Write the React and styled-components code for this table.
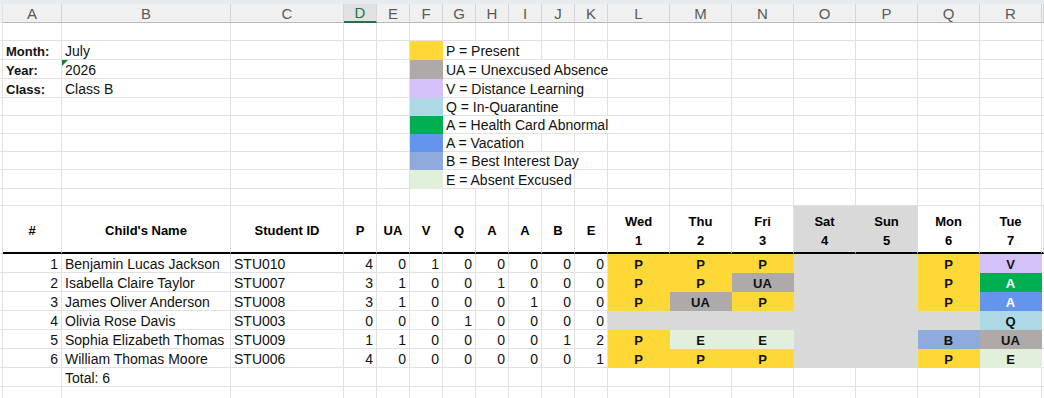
import React from 'react';
import styled, { createGlobalStyle } from 'styled-components';

const GRID = '#E1E1E1';
const COLS = '3px 59px 169px 113px repeat(8, 33px) repeat(7, 62px) 1fr';
const LETTERS = 'ABCDEFGHIJKLMNOPQR'.split('');

const C = {
  P: '#FDD836',
  UA: '#AEAAAA',
  V: '#D5C1F9',
  Q: '#ADD8E6',
  AH: '#00B050',
  AV: '#6495ED',
  B: '#8FAADC',
  E: '#E2EFDA',
  W: '#D9D9D9',
};

const GlobalStyle = createGlobalStyle`
  html, body { margin: 0; padding: 0; background: #fff; }
  body { font-family: "Liberation Sans", Arial, sans-serif; }
`;

const Sheet = styled.div`
  width: 1044px;
  height: 398px;
  overflow: hidden;
  background: #fff;
`;

const TopStrip = styled.div`
  height: 4px;
  background: #E8EBEE;
`;

const Row = styled.div`
  display: grid;
  grid-template-columns: ${COLS};
  height: ${p => p.$h}px;
`;

const ColHead = styled.div`
  box-sizing: border-box;
  display: flex;
  align-items: center;
  justify-content: center;
  background: ${p => (p.$active ? '#E1E1E1' : '#F0F0F0')};
  color: ${p => (p.$active ? '#217346' : '#5A5A5A')};
  border-right: 1px solid #D5D5D5;
  border-bottom: ${p => (p.$active ? '2px solid #217346' : '1px solid #B8B8B8')};
  font-size: 15px;
`;

const Gutter = styled.div`
  box-sizing: border-box;
  border-right: 1px solid ${GRID};
  border-bottom: 1px solid ${GRID};
  background: ${p => (p.$head ? '#F0F0F0' : '#fff')};
`;

const Cell = styled.div`
  position: relative;
  box-sizing: border-box;
  grid-column: span ${p => p.$span || 1};
  display: flex;
  align-items: flex-end;
  justify-content: ${p =>
    p.$align === 'right' ? 'flex-end' : p.$align === 'center' ? 'center' : 'flex-start'};
  padding: 0 3px;
  line-height: 15px;
  background: ${p => p.$bg || 'transparent'};
  border-right: 1px solid ${p => p.$bg || GRID};
  border-bottom: 1px solid ${p => p.$bg || GRID};
  font-size: ${p => (p.$bold ? 13 : 14)}px;
  font-weight: ${p => (p.$bold ? 700 : 400)};
  color: ${p => p.$color || '#111'};
  white-space: nowrap;
  overflow: hidden;
`;

const HeadCell = styled.div`
  box-sizing: border-box;
  display: flex;
  flex-direction: column;
  align-items: center;
  justify-content: center;
  padding-top: 3px;
  background: ${p => p.$bg || 'transparent'};
  border-right: 1px solid ${p => p.$bg || GRID};
  border-bottom: 2px solid #000;
  font-size: 13px;
  font-weight: 700;
  line-height: 19px;
  color: #000;
  white-space: nowrap;
`;

const TextFlag = styled.span`
  position: absolute;
  top: 0;
  left: 0;
  width: 0;
  height: 0;
  border-top: 6px solid #1E7B34;
  border-right: 6px solid transparent;
`;

const pad = cells => {
  const out = [...cells];
  let n = cells.reduce((s, c) => s + (c.span || 1), 0);
  while (n < 18) {
    out.push({});
    n += 1;
  }
  return out;
};

const SheetRow = ({ h, cells }) => (
  <Row $h={h}>
    <Gutter />
    {pad(cells).map((c, i) => (
      <Cell
        key={i}
        $span={c.span}
        $align={c.align}
        $bg={c.bg}
        $bold={c.bold}
        $color={c.color}
      >
        {c.flag && <TextFlag />}
        {c.t}
      </Cell>
    ))}
    <Cell />
  </Row>
);

const blank = n => Array.from({ length: n }, () => ({}));

const topRows = [
  { h: 18, cells: [] },
  {
    h: 19,
    cells: [
      { t: 'Month:', bold: true },
      { t: 'July' },
      ...blank(3),
      { bg: C.P },
      { t: 'P = Present', span: 3 },
    ],
  },
  {
    h: 19,
    cells: [
      { t: 'Year:', bold: true },
      { t: '2026', flag: true },
      ...blank(3),
      { bg: C.UA },
      { t: 'UA = Unexcused Absence', span: 6 },
    ],
  },
  {
    h: 19,
    cells: [
      { t: 'Class:', bold: true },
      { t: 'Class B' },
      ...blank(3),
      { bg: C.V },
      { t: 'V = Distance Learning', span: 5 },
    ],
  },
  { h: 18, cells: [...blank(5), { bg: C.Q }, { t: 'Q = In-Quarantine', span: 4 }] },
  { h: 18, cells: [...blank(5), { bg: C.AH }, { t: 'A = Health Card Abnormal', span: 6 }] },
  { h: 18, cells: [...blank(5), { bg: C.AV }, { t: 'A = Vacation', span: 3 }] },
  { h: 18, cells: [...blank(5), { bg: C.B }, { t: 'B = Best Interest Day', span: 5 }] },
  { h: 19, cells: [...blank(5), { bg: C.E }, { t: 'E = Absent Excused', span: 4 }] },
  { h: 17, cells: [] },
];

const heads = ['#', "Child's Name", 'Student ID', 'P', 'UA', 'V', 'Q', 'A', 'A', 'B', 'E'];
const days = [
  ['Wed', 1],
  ['Thu', 2],
  ['Fri', 3],
  ['Sat', 4, true],
  ['Sun', 5, true],
  ['Mon', 6],
  ['Tue', 7],
];

const MARK = {
  P: { bg: C.P },
  UA: { bg: C.UA },
  V: { bg: C.V },
  Q: { bg: C.Q },
  AH: { bg: C.AH, t: 'A', color: '#fff' },
  AV: { bg: C.AV, t: 'A', color: '#fff' },
  B: { bg: C.B },
  E: { bg: C.E },
  W: { bg: C.W, t: '' },
};

const students = [
  ['Benjamin Lucas Jackson', 'STU010', [4, 0, 1, 0, 0, 0, 0, 0], ['P', 'P', 'P', 'W', 'W', 'P', 'V']],
  ['Isabella Claire Taylor', 'STU007', [3, 1, 0, 0, 1, 0, 0, 0], ['P', 'P', 'UA', 'W', 'W', 'P', 'AH']],
  ['James Oliver Anderson', 'STU008', [3, 1, 0, 0, 0, 1, 0, 0], ['P', 'UA', 'P', 'W', 'W', 'P', 'AV']],
  ['Olivia Rose Davis', 'STU003', [0, 0, 0, 1, 0, 0, 0, 0], ['W', 'W', 'W', 'W', 'W', 'W', 'Q']],
  ['Sophia Elizabeth Thomas', 'STU009', [1, 1, 0, 0, 0, 0, 1, 2], ['P', 'E', 'E', 'W', 'W', 'B', 'UA']],
  ['William Thomas Moore', 'STU006', [4, 0, 0, 0, 0, 0, 0, 1], ['P', 'P', 'P', 'W', 'W', 'P', 'E']],
];

const studentCells = ([name, id, counts, marks], i) => [
  { t: i + 1, align: 'right' },
  { t: name },
  { t: id },
  ...counts.map(n => ({ t: n, align: 'right' })),
  ...marks.map(m => {
    const k = MARK[m];
    return { bg: k.bg, t: k.t !== undefined ? k.t : m, color: k.color, bold: true, align: 'center' };
  }),
];

export default function App() {
  return (
    <Sheet>
      <GlobalStyle />
      <TopStrip />
      <Row $h={19}>
        <Gutter $head />
        {LETTERS.map(l => (
          <ColHead key={l} $active={l === 'D'}>
            {l}
          </ColHead>
        ))}
        <ColHead />
      </Row>

      {topRows.map((r, i) => (
        <SheetRow key={i} h={r.h} cells={r.cells} />
      ))}

      <Row $h={48}>
        <Gutter />
        {heads.map((h, i) => (
          <HeadCell key={i}>{h}</HeadCell>
        ))}
        {days.map(([d, n, weekend]) => (
          <HeadCell key={d} $bg={weekend ? C.W : undefined}>
            <span>{d}</span>
            <span>{n}</span>
          </HeadCell>
        ))}
        <HeadCell />
      </Row>

      {students.map((s, i) => (
        <SheetRow key={s[1]} h={19} cells={studentCells(s, i)} />
      ))}

      <SheetRow h={19} cells={[{}, { t: 'Total: 6' }]} />
      <SheetRow h={20} cells={[]} />
    </Sheet>
  );
}
